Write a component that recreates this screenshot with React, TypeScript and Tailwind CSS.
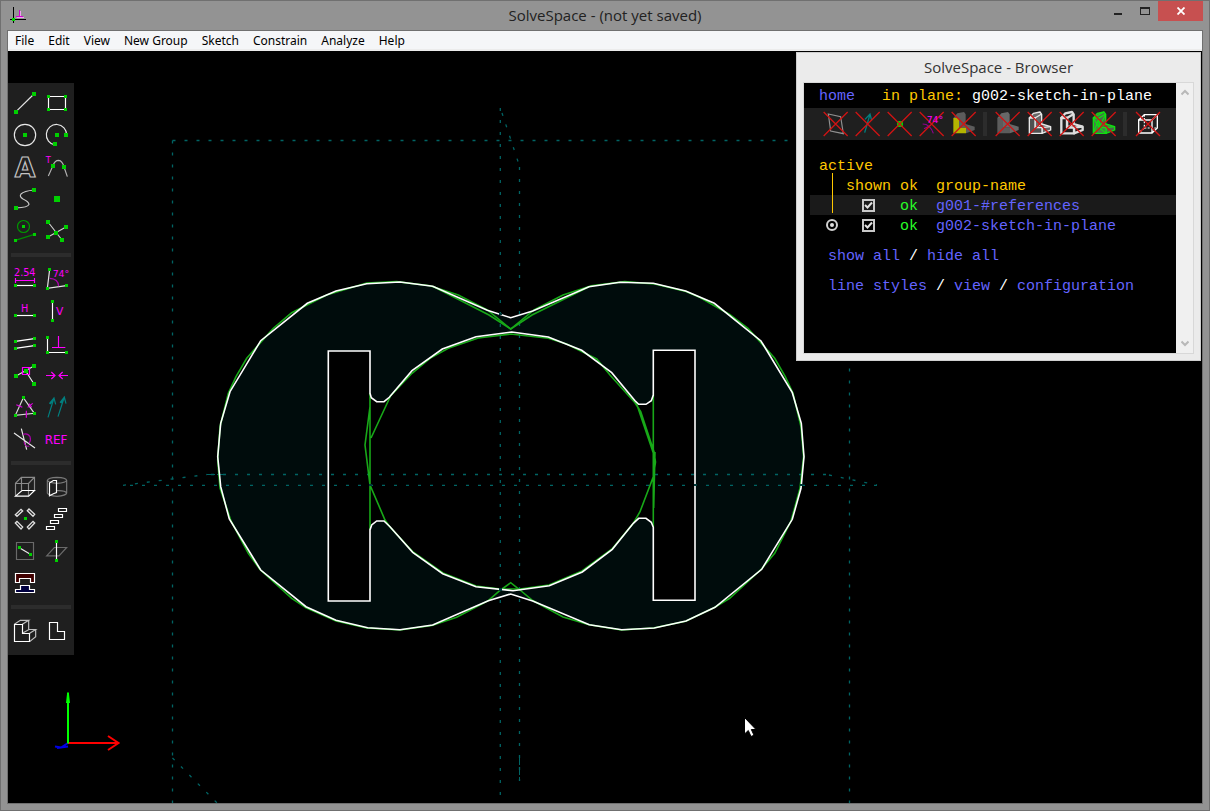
import type { ReactNode } from 'react';

const W = '#ffffff';
const G = '#00d000';
const M = '#ff00ff';
const TEAL = '#008080';
const GREY = '#6a6a6a';

/* Icons are drawn on a sheet with 3 units per pixel; x and y pick the 32px cell. */
function Cell({ x, y, children }: { x: number; y: number; children: ReactNode }) {
  return (
    <svg className="block size-8" viewBox={`${x} ${y} 96 96`} fill="none" stroke="#e8e8e8" strokeWidth={3.5} aria-hidden="true">
      {children}
    </svg>
  );
}

function Dots({ at, size = 12 }: { at: [number, number][]; size?: number }) {
  return (
    <g fill={G} stroke="none">
      {at.map(([x, y]) => (
        <rect key={`${x}-${y}`} x={x - size / 2} y={y - size / 2} width={size} height={size} />
      ))}
    </g>
  );
}

function Label({ x, y, size, children }: { x: number; y: number; size: number; children: string }) {
  return (
    <text x={x} y={y} fontSize={size} fontFamily="DejaVu Sans, sans-serif" fill={M} stroke="none">
      {children}
    </text>
  );
}

type Tool = { name: string; icon: ReactNode };

const sketchTools: Tool[] = [
  { name: 'Line segment', icon: <Cell x={27} y={33}><path d="M48 107L102 54" /><Dots at={[[48, 108], [102, 54]]} /></Cell> },
  { name: 'Rectangle', icon: <Cell x={123} y={33}><path stroke={W} d="M145.5 61.5H196.500V100.500H145.500Z" /><Dots size={9} at={[[145.5, 61.5], [196.5, 61.5], [145.5, 100.5], [196.5, 100.5]]} /></Cell> },
  { name: 'Circle', icon: <Cell x={27} y={129}><circle cx={75} cy={177} r={32} /><Dots at={[[75, 177]]} /></Cell> },
  { name: 'Arc', icon: <Cell x={123} y={129}><path d="M200 177A30.500 31 0 1 0 165 207" /><Dots at={[[171, 177], [198, 177], [165, 204]]} /></Cell> },
  {
    name: 'Text in a font',
    icon: (
      <Cell x={27} y={225}>
        <text x={75.5} y={304} fontSize={80} textAnchor="middle" fontFamily="DejaVu Sans, sans-serif" fontWeight={700} fill="#1f1f1f" stroke="#c4c4c4">A</text>
      </Cell>
    ),
  },
  { name: 'Tangent arc', icon: <Cell x={123} y={225}><path stroke="#b4b4b4" d="M145 300L159 269Q164 253 176 253Q187 254 192 273L202 302" /><Dots at={[[159, 270], [192, 273]]} /><Label x={137} y={262} size={25}>T</Label></Cell> },
  { name: 'Cubic spline', icon: <Cell x={27} y={321}><path stroke="#c8c8c8" d="M48 396Q84 394 87 385Q86 377 69 369Q57 362 63 354Q72 345 102 342" /><Dots at={[[48, 396], [102, 342]]} /></Cell> },
  { name: 'Point', icon: <Cell x={123} y={321}><Dots size={18} at={[[171, 369]]} /></Cell> },
  { name: 'Construction', icon: <Cell x={27} y={417}><circle cx={70.500} cy={451.500} r={18} stroke="#009800" /><path stroke="#008c00" d="M46 493L103 475" /><Dots size={9} at={[[70.5, 451.5], [46.5, 493.5], [103.5, 475.5]]} /></Cell> },
  { name: 'Split curves', icon: <Cell x={123} y={417}><path stroke="#d0d0d0" d="M144 438L186 492M144 483L198 453" /><Dots at={[[144, 438], [198, 453], [144, 483], [186, 492], [168, 471]]} /></Cell> },
];

const constraintTools: Tool[] = [
  { name: 'Distance', icon: <Cell x={27} y={39}><Label x={42} y={78} size={29}>2.54</Label><path stroke={M} d="M46.500 84V99M103.500 84V99M46 91.500H104" /><path stroke={W} d="M46 106.500H104" /><Dots size={9} at={[[46.5, 106.5], [103.5, 106.5]]} /></Cell> },
  { name: 'Angle', icon: <Cell x={123} y={39}><path d="M149 58L142 115L199 107" /><path stroke="#b000b0" d="M149 85Q175 86 176 109" /><Label x={158} y={80} size={28}>74°</Label><Dots size={9} at={[[148.5, 58.5], [142.5, 115.5], [199.5, 106.5]]} /></Cell> },
  { name: 'Horizontal', icon: <Cell x={27} y={135}><Label x={63} y={186} size={29}>H</Label><path stroke={W} d="M46 196.500H104" /><Dots size={9} at={[[46.5, 196.5], [103.5, 196.5]]} /></Cell> },
  { name: 'Vertical', icon: <Cell x={123} y={135}><Label x={168} y={195} size={32}>V</Label><path stroke={W} d="M157.500 154V212" /><Dots size={9} at={[[157.5, 154.5], [157.5, 211.5]]} /></Cell> },
  { name: 'Parallel', icon: <Cell x={27} y={231}><path stroke={W} d="M46 274L103 266M46 295L103 287" /><Dots size={9} at={[[46.5, 274.5], [103.5, 265.5], [46.5, 295.5], [103.5, 286.5]]} /></Cell> },
  { name: 'Perpendicular', icon: <Cell x={123} y={231}><path stroke={W} d="M142.500 263V307.500H200" /><path stroke={M} d="M175.500 258V292M156 292.500H196" /><Dots size={9} at={[[142.5, 262.5], [142.5, 307.5], [199.5, 307.5]]} /></Cell> },
  { name: 'Point on line', icon: <Cell x={27} y={327}><path d="M48 378L102 348M77 363L102 402" /><Dots at={[[48, 378], [102, 348], [102, 402], [78, 363]]} /><path stroke={M} d="M67.500 352.500H88.500V373.500H67.500Z" /></Cell> },
  { name: 'Symmetric', icon: <Cell x={123} y={327}><path stroke={M} d="M138 376.500H164M154 366L165 376.500L154 387M204 376.500H178M188 366L177 376.500L188 387" /></Cell> },
  { name: 'Equal length', icon: <Cell x={27} y={423}><path stroke="#d8d8d8" d="M70 443L46 496L103 490Z" /><path stroke="#e000e0" d="M49 464L67 472M83 472L98 460M79 482V503M87 461L95 472" /><Dots size={9} at={[[70.5, 442.5], [46.5, 496.5], [103.5, 490.5]]} /></Cell> },
  { name: 'Same orientation', icon: <Cell x={123} y={423}><path stroke={TEAL} d="M144 502L162 444M148 461L162 444L167 463M150 462L160 452M174 500L193 441M180 458L193 441L198 461M182 459L192 449" /></Cell> },
  { name: 'Other angle', icon: <Cell x={27} y={519}><path d="M42 549L105 594M64 536L80 599" /><path stroke="#a800a8" d="M69 553Q83 548 90 560Q94 571 87 580M72 575Q75 592 88 588" /></Cell> },
  { name: 'Reference', icon: <Cell x={123} y={519}><Label x={134} y={582} size={36}>REF</Label></Cell> },
];

const groupTools: Tool[] = [
  {
    name: 'Extrude',
    icon: (
      <Cell x={27} y={63}>
        <path stroke="#8a8a8a" d="M46.500 139V100L64 82H103.500V121M46.500 100.500H85.500V139M85.500 100.500L103 82M64.500 82V121" />
        <path stroke={W} d="M46.500 138.500H86L103.500 121.500H66Z" />
      </Cell>
    ),
  },
  {
    name: 'Lathe',
    icon: (
      <Cell x={123} y={63}>
        <path stroke="#7a7a7a" d="M142 91Q145 83 171 82Q198 83 200 91Q198 98 171 100Q145 98 142 91V129Q145 137 171 139Q198 137 200 129V91M171 122Q196 121 200 129" />
        <path stroke={W} d="M148.500 99L160 91.500H169.500V128L160 131L148.500 137Z" />
      </Cell>
    ),
  },
  {
    name: 'Step and repeat rotating',
    icon: (
      <Cell x={27} y={159}>
        <path stroke="#e0e0e0" strokeWidth={4} d="M46 194L63 178L68 183L51 199ZM82 182L87 177L104 193L99 199ZM46 219L51 214L68 231L63 237ZM104 219L99 214L82 231L87 237Z" />
        <Dots size={9} at={[[76.5, 205.5]]} />
      </Cell>
    ),
  },
  {
    name: 'Step and repeat translating',
    icon: (
      <Cell x={123} y={159}>
        <path stroke={W} d="M175.500 175.500H199.500V184.500H175.500ZM163.500 193.500H187.500V202.500H163.500ZM151.500 211.500H175.500V220.500H151.500ZM139.500 229.500H163.500V238.500H139.500Z" />
      </Cell>
    ),
  },
  { name: 'Sketch in workplane', icon: <Cell x={27} y={255}><path stroke={GREY} d="M49.500 277.500H100.500V328.500H49.500Z" /><path d="M58 293L91 313" /><Dots size={9} at={[[58.5, 292.5], [91.5, 313.5]]} /></Cell> },
  { name: 'Sketch in 3d', icon: <Cell x={123} y={255}><path stroke={GREY} d="M140 317.500H177L200 292.500H163Z" /><path stroke={W} d="M169.500 275V331" /><Dots size={9} at={[[169.5, 274.5], [169.5, 331.5]]} /></Cell> },
  {
    name: 'Link / assemble',
    icon: (
      <Cell x={27} y={351}>
        <path stroke={W} fill="#400000" d="M46.500 370.500H103.500V397.500H91.500V385.500H58.500V397.500H46.500Z" />
        <path stroke={W} fill="#000040" d="M46.500 427.500V418.500H61.500V406.500H88.500V418.500H103.500V427.500Z" />
      </Cell>
    ),
  },
];

const viewTools: Tool[] = [
  {
    name: 'Nearest isometric view',
    icon: (
      <Cell x={27} y={495}>
        <path stroke="#c0c0c0" d="M43 523L61 511H86L67 523M86 511V538M67 550L87 538.500H107L89 550M107 540V560L89 575" />
        <path stroke={W} d="M43.500 523.500H67.500V550.500H88.500V574.500H43.500Z" />
      </Cell>
    ),
  },
  { name: 'Align view to workplane', icon: <Cell x={123} y={495}><path stroke={W} d="M148.500 517.500H172.500V544.500H193.500V568.500H148.500Z" /></Cell> },
];

function ToolGroup({ tools, label }: { tools: Tool[]; label: string }) {
  return (
    <div role="group" aria-label={label} className="grid grid-cols-2">
      {tools.map((t) => (
        <button key={t.name} type="button" aria-label={t.name} title={t.name} className="size-8 hover:bg-[#303030]">
          {t.icon}
        </button>
      ))}
    </div>
  );
}

function Divider() {
  return <div className="mx-0.5 my-1.5 h-1 bg-[#2c2c2c]" />;
}

function Toolbar() {
  return (
    <nav aria-label="Tools" className="relative mt-8 w-fit bg-[#1f1f1f] px-px pt-1 pb-2">
      <ToolGroup label="Sketch" tools={sketchTools} />
      <Divider />
      <ToolGroup label="Constrain" tools={constraintTools} />
      <Divider />
      <ToolGroup label="New group" tools={groupTools} />
      <Divider />
      <ToolGroup label="View" tools={viewTools} />
    </nav>
  );
}

const OUTER =
  'M217.700 456.700L220.700 423.300L230 391.700L260.700 340.700L307.300 303.300L336 291L366.700 283.700L400 282L432.700 286.300L487.300 310.300L510.700 317.700L532.700 311L589 286.700L620 282.300L653.300 283.300L685.700 291L714.300 303.300L761 341L792.300 392.700L801.300 423.300L804 456.700L801 488.300L792.300 519.300L761.700 569.300L715 607.300L686 621L654.300 628L621.700 629.700L589.300 624.700L532.700 601L510.700 594L488.300 600.700L432.700 625L400 629.700L367.700 627.700L336 620.300L306 606.700L260.700 570L229.300 519L220.700 486.700Z';

const INNER =
  'M370 351V393.300L371.300 397.700L376.700 401.700L384 401.700L389.300 397.300L412 370.700L442.300 349L476 336.700L511.700 332L548.300 337L581.700 350.300L611.700 372.700L635 400.700L638.700 404.300L646 404.300L651.300 400.700L653.300 395V350.200H695V600.200H653.300V527.300L651.300 522.300L646 518.300L638.700 518.300L633.300 523.300L612.300 549.300L582.300 572L549.300 585.700L513 590.700L476 586.700L442.700 573.700L412.700 552.300L390 526.700L384 521L376.700 521L371.700 525L370 530V601H328.300V351Z';

const GREEN =
  'M217.700 460L220 426.700L228.300 393.300L236 376.700L246.700 358.300L273.300 328.300L291.700 312.700L326.700 295L366.700 283L396.700 281.600L430 285.700L458.300 295L487.300 310L510.700 329L534 310L563 295L591.300 285.700L624.700 281.600L654.700 284L686 291.500L700 297.500L729.700 314.500L748 328.300L774.700 358.300L785.300 376.700L793 393.300L801 426.700L803.600 456.700L800 488.300L791 521L774.700 553.300L761 569.500L729.700 598.300L714 607.700L685.700 621.300L653.300 628L621.300 630L589 624.700L563 617L532.700 600.500L520 590L510.700 582.700L500 590.500L488.300 600.700L456.700 617.300L432 625.500L400 630L366.700 628L336 621L306 607.700L291.700 598.300L260 569.500L248.300 553.300L231 521L220 488Z';

const GREEN_INNER =
  'M432.700 286.300L489 315L510.700 329L532 315L589 286.700M391 395L371 438M390 396.500L412 373.300L430 358.300L448.300 348.300L478.300 338L510.700 334L548.300 338.300L566.700 344L596.700 359L610 375L635 402.700L640.700 411.700L654 451.700L655.500 462L653.300 476.700L640 511.700L633.300 523.300L612 549L582 571L549 585L520 589H502M655 452L653.700 508M636 402L654 455M370 393V530M653.300 395V527M370 406.700L365 445L370 485L385 520L390 527L413 552L443 573L476 586L500 589';

function Scene() {
  return (
    <svg className="absolute inset-0 size-full" viewBox="8 51 1194 752" preserveAspectRatio="xMinYMin slice" fill="none" role="img" aria-label="Sketch of two overlapping rings with slots">
      <path d={`${OUTER}${INNER}`} fill="#000c0c" fillRule="evenodd" />
      <g stroke="#006464" strokeWidth={1.300} strokeDasharray="3 9">
        <path d="M172.500 140.500V803" />
        <path d="M172.500 140.500H849" />
        <path d="M849.500 140.500V803" />
        <path d="M500.300 108V803" />
        <path d="M502 113L519.500 166" />
        <path d="M519.500 167V781" />
        <path d="M211 474.500H829" />
        <path d="M829 475L877 485" />
        <path d="M130 485.300H877" />
        <path d="M123 485.300L207 474.500" />
        <path d="M172.500 758L222 808" />
      </g>
      <path stroke="#006464" d="M207 474.500H225M519.500 757V781" strokeDasharray="8 2" />
      <g stroke="#18a818" strokeWidth={1.600}>
        <path d={GREEN} />
        <path d={GREEN_INNER} />
      </g>
      <g stroke={W} strokeWidth={1.600}>
        <path d={OUTER} />
        <path d={INNER} />
      </g>
      <path fill="#003838" d="M499 313h3v2h-3zM499 588h3v3h-3zM694 484h3v2h-3zM800 484h3v2h-3zM369 484h3v2h-3z" />
      <g strokeWidth={2}>
        <path stroke="#0000e8" d="M68 743L61 747.500L55 746.500M57 748L68 746.500" />
        <path stroke="#ff0000" d="M68 743H118M108 736L118.500 743L108 750" />
        <path stroke="#00ff00" d="M68 743.500V692.500" />
        <path stroke="#00ff00" d="M67 703L68 694L69 703" />
      </g>
      <path fill={W} stroke="#000000" strokeWidth={1} d="M744.500 717.500V734L748.300 730.500L751 736.500L754 735.200L751.300 729.500H756Z" />
    </svg>
  );
}

function CrossOut({ cx }: { cx: number }) {
  return <path stroke="#d01414" strokeWidth={4} d={`M${cx - 36} 186L${cx + 36} 258M${cx + 36} 186L${cx - 36} 258`} />;
}

const FACES = {
  front: 'M472 204H489V233H510V250H472Z',
  back: 'M472 204L484 190L504 186L509 193V222L536 230V240L510 250V233L489 233V204Z',
};

function Bracket({ shift, front, back, line, width = 4 }: { shift: number; front: string; back: string; line?: string; width?: number }) {
  return (
    <g transform={`translate(${shift} 0)`} stroke={line ?? 'none'} strokeWidth={width} strokeLinejoin="round">
      <path d={FACES.back} fill={back} />
      <path d={FACES.front} fill={front} />
      <path d="M489 204L509 192M489 233L509 222M510 233L536 230" />
    </g>
  );
}

const showTools: (Tool | null)[] = [
  { name: 'Workplanes', icon: <Cell x={69} y={174}><path stroke="#909090" d="M97 192L134 200L142 251L104 243Z" /><CrossOut cx={119} /></Cell> },
  { name: 'Normals', icon: <Cell x={165} y={174}><path stroke={TEAL} strokeWidth={4} d="M206 248L222 193M207 208L222 192L227 211" /><CrossOut cx={215} /></Cell> },
  { name: 'Points', icon: <Cell x={261} y={174}><Dots size={18} at={[[312, 222]]} /><CrossOut cx={311} /></Cell> },
  { name: 'Constraints', icon: <Cell x={357} y={174}><path stroke="#900090" d="M380 222Q402 222 412 250M384 236L404 226" /><CrossOut cx={407} /><Label x={392} y={219} size={28}>74°</Label></Cell> },
  { name: 'Faces', icon: <Cell x={453} y={174}><Bracket shift={0} front="#b4b400" back="#5c5c5c" /><CrossOut cx={503} /></Cell> },
  null,
  { name: 'Shaded', icon: <Cell x={585} y={174}><Bracket shift={132} front="#5c5c5c" back="#686868" /><CrossOut cx={635} /></Cell> },
  { name: 'Edges', icon: <Cell x={681} y={174}><Bracket shift={228} front="#505050" back="#686868" line="#e8e8e8" /><CrossOut cx={731} /></Cell> },
  { name: 'Outlines', icon: <Cell x={777} y={174}><Bracket shift={324} front="#1f1f1f" back="#1f1f1f" line="#dddddd" width={7} /><CrossOut cx={827} /></Cell> },
  { name: 'Mesh', icon: <Cell x={873} y={174}><Bracket shift={420} front="#4a7a4a" back="#4a6a4a" line="#10e010" /><path stroke="#10e010" d="M892 250L909 204M892 204L909 233L930 250M909 233L929 193M892 204L924 186M892 250L909 233" /><CrossOut cx={923} /></Cell> },
  null,
  { name: 'Hidden lines', icon: <Cell x={1005} y={174}><path stroke={W} strokeWidth={4} d="M1028 210H1068V249H1028ZM1028 210L1045 194H1084L1068 210M1084 194V234L1068 249" /><path stroke={W} strokeDasharray="6 4" d="M1045 194V234H1084M1045 234L1028 249" /><CrossOut cx={1056} /></Cell> },
];

function Checkbox({ label }: { label: string }) {
  return (
    <span className="relative block size-[13px]">
      <input type="checkbox" defaultChecked aria-label={label} className="peer block size-[13px] appearance-none border-2 border-[#c8c8c8]" />
      <svg className="pointer-events-none absolute inset-0 hidden size-[13px] peer-checked:block" viewBox="0 0 13 13" fill="none" stroke="#e0e0e0" strokeWidth={2} aria-hidden="true">
        <path d="M3 6L5.500 8.500L10 3.500" />
      </svg>
    </span>
  );
}

function Link({ children }: { children: string }) {
  return <a href="#" className="text-[#6464ff]">{children}</a>;
}

function Browser() {
  return (
    <section aria-label="Browser" className="absolute top-px right-px w-[405px] border border-[#cfcfcf] bg-[#ebebeb] px-1.5 pb-1.5">
      <h2 className="h-[29px] text-center font-['Open_Sans',sans-serif] text-[15px] leading-[29px] text-[#333]">SolveSpace - Browser</h2>
      <div className="flex border border-[#d8d8d8] bg-[#f0f0f0]">
        <div className="min-h-[270px] flex-1 bg-black font-['Liberation_Mono',monospace] text-[15px] leading-5 text-white">
          <p className="flex h-[25px] items-center gap-[27px] pt-0.5 pl-[15px]">
            <Link>home</Link>
            <span><span className="text-[#ffc800]">in plane:</span> g002-sketch-in-plane</span>
          </p>
          <div role="toolbar" aria-label="Show and hide" className="flex h-8 items-center bg-[#1f1f1f] pl-[15px]">
            {showTools.map((t, i) =>
              t ? (
                <button key={t.name} type="button" aria-label={t.name} title={t.name} className="size-8">{t.icon}</button>
              ) : (
                <span key={i} className="mx-1 h-6 w-1 bg-[#2c2c2c]" />
              ),
            )}
          </div>
          <div className="pt-[15px] pl-1.5">
            <table className="w-full table-fixed border-collapse text-left leading-4">
              <colgroup>
                <col className="w-9" />
                <col className="w-[54px]" />
                <col className="w-9" />
                <col />
              </colgroup>
              <thead className="text-[#ffc800]">
                <tr className="h-5">
                  <th colSpan={4} className="relative p-0 pt-1 pl-[9px] font-normal">
                    active
                    <span className="absolute top-[18px] left-[22px] h-10 w-px bg-[#ffc800]" />
                  </th>
                </tr>
                <tr className="h-5">
                  <td className="p-0" />
                  <th className="p-0 pt-1 font-normal">shown</th>
                  <th className="p-0 pt-1 font-normal">ok</th>
                  <th className="p-0 pt-1 font-normal">group-name</th>
                </tr>
              </thead>
              <tbody>
                <tr className="h-5 bg-[#1a1a1a]">
                  <td className="p-0" />
                  <td className="p-0 pl-4"><Checkbox label="Show g001-#references" /></td>
                  <td className="p-0 pt-1 text-[#28ff28]">ok</td>
                  <td className="p-0 pt-1"><Link>g001-#references</Link></td>
                </tr>
                <tr className="h-5">
                  <td className="p-0 pl-4">
                    <input type="radio" name="active" defaultChecked aria-label="Activate g002-sketch-in-plane" className="grid size-3 appearance-none place-content-center rounded-full border-2 border-[#d0d0d0] before:size-1 before:rounded-full before:bg-[#e0e0e0]" />
                  </td>
                  <td className="p-0 pl-4"><Checkbox label="Show g002-sketch-in-plane" /></td>
                  <td className="p-0 pt-1 text-[#28ff28]">ok</td>
                  <td className="p-0 pt-1"><Link>g002-sketch-in-plane</Link></td>
                </tr>
              </tbody>
            </table>
            <div className="mt-3 flex flex-col gap-2.5 pl-[18px]">
              <p><Link>show all</Link> / <Link>hide all</Link></p>
              <p><Link>line styles</Link> / <Link>view</Link> / <Link>configuration</Link></p>
            </div>
          </div>
        </div>
        <div className="flex w-[17px] flex-col items-center justify-between py-1.5">
          <svg className="h-2 w-2" viewBox="0 0 8 8" fill="none" stroke="#b8b8b8" strokeWidth={2} aria-hidden="true"><path d="M0.500 5.500L4 2L7.500 5.500" /></svg>
          <svg className="h-2 w-2" viewBox="0 0 8 8" fill="none" stroke="#b8b8b8" strokeWidth={2} aria-hidden="true"><path d="M0.500 2.500L4 6L7.500 2.500" /></svg>
        </div>
      </div>
    </section>
  );
}

const menus = ['File', 'Edit', 'View', 'New Group', 'Sketch', 'Constrain', 'Analyze', 'Help'];

export default function App() {
  return (
    <div className="flex h-screen flex-col border border-[#707070] bg-[#939393] px-1.5 pb-1.5">
      <header className="grid h-[29px] shrink-0 grid-cols-[1fr_auto_1fr]">
        <svg className="mt-1.5 ml-[3px] h-4 w-4" viewBox="0 0 48 48" fill="none" strokeWidth={3} aria-hidden="true">
          <path stroke="#000000" d="M10.500 0V48M0 37.500H48" />
          <path stroke="#f0a0f0" d="M31.500 12V30M20 31.500H42" />
          <path stroke="#d000d0" d="M28.500 9V28M18 28.500H39" />
          <path fill="#00d800" d="M6 33h9v9h-9z" />
        </svg>
        <h1 className="font-['Open_Sans',sans-serif] text-[15px] leading-[29px] text-[#222]">SolveSpace - (not yet saved)</h1>
        <div className="flex items-start justify-end">
          <button type="button" aria-label="Minimize" className="h-5 w-7 pl-[11px]">
            <svg className="h-5 w-3" viewBox="0 0 12 20" aria-hidden="true"><path fill="#222222" d="M0 12h8v2h-8z" /></svg>
          </button>
          <button type="button" aria-label="Maximize" className="h-5 w-[27px] pl-[9px]">
            <svg className="h-5 w-3" viewBox="0 0 12 20" fill="none" aria-hidden="true"><path fill="#222222" fillRule="evenodd" d="M0 6h10v8h-10zM1 8v5h8v-5z" /></svg>
          </button>
          <button type="button" aria-label="Close" className="grid h-5 w-[45px] place-content-center bg-[#c75050]">
            <svg className="h-2 w-2" viewBox="0 0 8 8" fill="none" stroke="#ffffff" strokeWidth={1.800} aria-hidden="true"><path d="M0.500 0.500L7.500 7.500M7.500 0.500L0.500 7.500" /></svg>
          </button>
        </div>
      </header>
      <div className="flex min-h-0 flex-1 flex-col border border-[#707070]">
        <nav aria-label="Menu" className="flex h-5 shrink-0 items-end border-b-2 border-[#ececec] bg-[#f5f6f8] font-['Noto_Sans',sans-serif] text-[12px] text-black">
          {menus.map((m) => (
            <button key={m} type="button" className="px-[7px] leading-4">{m}</button>
          ))}
        </nav>
        <main className="relative min-h-0 flex-1 overflow-hidden bg-black">
          <Scene />
          <Toolbar />
          <Browser />
        </main>
      </div>
    </div>
  );
}
